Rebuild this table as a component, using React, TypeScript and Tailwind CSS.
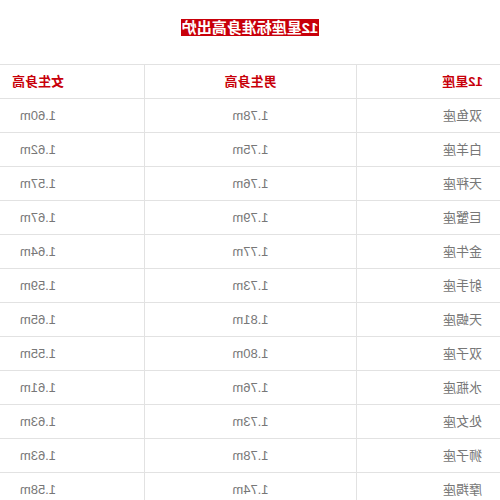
const rows = [
  ["双鱼座", "1.78m", "1.60m"],
  ["白羊座", "1.75m", "1.62m"],
  ["天秤座", "1.76m", "1.57m"],
  ["巨蟹座", "1.79m", "1.67m"],
  ["金牛座", "1.77m", "1.64m"],
  ["射手座", "1.73m", "1.59m"],
  ["天蝎座", "1.81m", "1.65m"],
  ["双子座", "1.80m", "1.55m"],
  ["水瓶座", "1.76m", "1.61m"],
  ["处女座", "1.73m", "1.63m"],
  ["狮子座", "1.78m", "1.63m"],
  ["摩羯座", "1.74m", "1.58m"],
];

export default function App() {
  return (
    <div className="w-[500px] h-[500px] overflow-hidden bg-white -scale-x-100 font-['Liberation_Sans','Noto_Sans_CJK_SC',sans-serif]">
      <div className="flex justify-center pt-[19px]">
        <span className="bg-[#c8000a] text-white text-[15px] font-bold leading-[17px] px-px">12星座标准身高出炉</span>
      </div>
      <div className="w-[636px] ml-[-68px] mt-[28px] border-t border-[#e2e2e2]">
        <div className="grid grid-cols-3 h-[34px] border-b border-[#e2e2e2] text-[13px] font-bold text-[#c8000a]">
          <div className="flex items-center justify-center border-r border-[#e2e2e2]">12星座</div>
          <div className="flex items-center justify-center border-r border-[#e2e2e2]">男生身高</div>
          <div className="flex items-center justify-center">女生身高</div>
        </div>
        {rows.map((r) => (
          <div key={r[0]} className="grid grid-cols-3 h-[34px] border-b border-[#e2e2e2] text-[13px] text-[#777]">
            <div className="flex items-center justify-center border-r border-[#e2e2e2]">{r[0]}</div>
            <div className="flex items-center justify-center border-r border-[#e2e2e2]">{r[1]}</div>
            <div className="flex items-center justify-center">{r[2]}</div>
          </div>
        ))}
      </div>
    </div>
  );
}
